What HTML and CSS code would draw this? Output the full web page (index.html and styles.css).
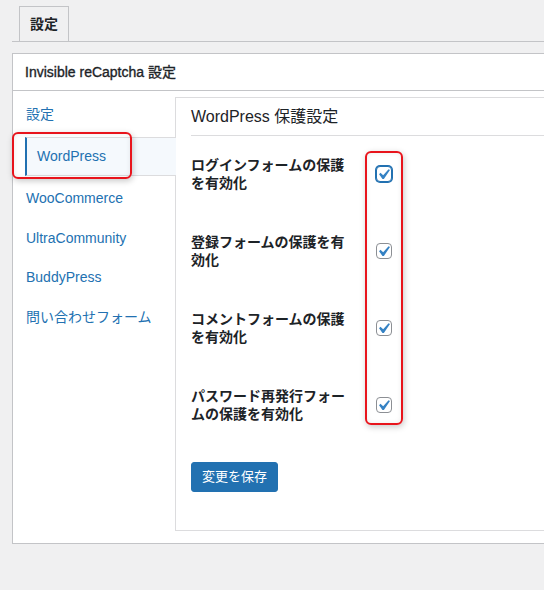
FILE: index.html
```html
<!DOCTYPE html>
<html lang="ja">
<head>
<meta charset="utf-8">
<title>Invisible reCaptcha 設定</title>
<link rel="stylesheet" href="styles.css">
</head>
<body>
<div class="wrap">
  <nav class="tabs"><span class="tab">設定</span></nav>
  <div class="box">
    <div class="box-head">Invisible reCaptcha 設定</div>
    <div class="box-body">
      <ul class="side">
        <li class="side-item"><a href="#">設定</a></li>
        <li class="side-item active"><a href="#">WordPress</a></li>
        <li class="side-item"><a href="#">WooCommerce</a></li>
        <li class="side-item"><a href="#">UltraCommunity</a></li>
        <li class="side-item"><a href="#">BuddyPress</a></li>
        <li class="side-item"><a href="#">問い合わせフォーム</a></li>
      </ul>
      <div class="panel">
        <h2 class="panel-title">WordPress 保護設定</h2>
        <div class="row">
          <div class="label">ログインフォームの保護を有効化</div>
          <div class="field"><span class="cb focus"><svg viewBox="0 0 20 20"><path d="M14.83 4.89l1.34.94-5.81 8.38H9.02L5.78 9.67l1.34-1.25 2.57 2.4z" fill="#3582c4"/></svg></span></div>
        </div>
        <div class="row">
          <div class="label">登録フォームの保護を有効化</div>
          <div class="field"><span class="cb"><svg viewBox="0 0 20 20"><path d="M14.83 4.89l1.34.94-5.81 8.38H9.02L5.78 9.67l1.34-1.25 2.57 2.4z" fill="#3582c4"/></svg></span></div>
        </div>
        <div class="row">
          <div class="label">コメントフォームの保護を有効化</div>
          <div class="field"><span class="cb"><svg viewBox="0 0 20 20"><path d="M14.83 4.89l1.34.94-5.81 8.38H9.02L5.78 9.67l1.34-1.25 2.57 2.4z" fill="#3582c4"/></svg></span></div>
        </div>
        <div class="row">
          <div class="label">パスワード再発行フォームの保護を有効化</div>
          <div class="field"><span class="cb"><svg viewBox="0 0 20 20"><path d="M14.83 4.89l1.34.94-5.81 8.38H9.02L5.78 9.67l1.34-1.25 2.57 2.4z" fill="#3582c4"/></svg></span></div>
        </div>
        <button class="btn" type="button">変更を保存</button>
        <div class="mark mark-checks"></div>
      </div>
      <div class="mark mark-nav"></div>
    </div>
  </div>
</div>
</body>
</html>
```

FILE: styles.css
```css
html, body {
  margin: 0;
  padding: 0;
}
body {
  background: #f0f0f1;
  font-family: "Liberation Sans", "Noto Sans CJK JP", sans-serif;
  font-size: 14px;
  color: #1d2327;
}
.wrap {
  padding: 6px 0 0 12px;
}
.tabs {
  display: flex;
  padding-left: 7px;
  border-bottom: 1px solid #c3c4c7;
}
.tab {
  display: block;
  height: 34px;
  line-height: 34px;
  padding: 0 10px;
  border: 1px solid #c3c4c7;
  border-bottom: 0;
  font-weight: 700;
  font-size: 14px;
  background: #f0f0f1;
}
.box {
  margin-top: 11px;
  background: #fff;
  border: 1px solid #c3c4c7;
  border-right: 0;
}
.box-head {
  height: 36px;
  line-height: 36px;
  padding-left: 12px;
  border-bottom: 1px solid #c3c4c7;
  font-size: 14px;
  font-weight: 400;
  -webkit-text-stroke: 0.35px #1d2327;
}
.box-body {
  display: flex;
  align-items: flex-start;
  position: relative;
}
.side {
  list-style: none;
  margin: 0;
  padding: 3.5px 0 0 0;
  width: 162px;
  flex: none;
}
.side-item a {
  display: block;
  height: 39.5px;
  line-height: 39.5px;
  padding-left: 13px;
  color: #2271b1;
  text-decoration: none;
  font-size: 14px;
}
.side-item.active {
  position: relative;
  z-index: 1;
  margin: 3px -1px 3px 12px;
  border-top: 1px solid #dcdcde;
  border-bottom: 1px solid #dcdcde;
  border-left: 2px solid #2271b1;
  background: #f5f9fd;
}
.side-item.active a {
  height: 37px;
  line-height: 37px;
  padding-left: 10px;
}
.panel {
  flex: 1;
  position: relative;
  margin: 6px 0 12px 0;
  border: 1px solid #dcdcde;
  border-right: 0;
  padding: 0 0 38px 15px;
  background: #fff;
}
.panel-title {
  margin: 0;
  height: 37px;
  line-height: 37px;
  font-size: 16px;
  font-weight: 400;
  border-bottom: 1px solid #dcdcde;
  color: #1d2327;
}
.row {
  display: grid;
  grid-template-columns: 185px 1fr;
  align-items: center;
  padding: 20px 0 21px;
}
.label {
  padding-right: 25px;
  font-weight: 700;
  font-size: 14px;
  line-height: 18px;
}
.cb {
  display: block;
  box-sizing: border-box;
  width: 16px;
  height: 16px;
  border: 1px solid #8c8f94;
  border-radius: 4px;
  background: #fff;
}
.cb svg {
  display: block;
  width: 21px;
  height: 21px;
  margin: -3px 0 0 -4px;
}
.cb.focus {
  border-color: #2271b1;
  box-shadow: 0 0 0 1px #2271b1;
}
.btn {
  display: block;
  margin-top: 18px;
  height: 30px;
  padding: 0 10px;
  border: 1px solid #2271b1;
  border-radius: 3px;
  background: #2271b1;
  color: #fff;
  font-family: "Liberation Sans", "Noto Sans CJK JP", sans-serif;
  font-size: 13px;
  line-height: 28px;
}
.mark {
  position: absolute;
  box-sizing: border-box;
  border: 2px solid #e8141c;
  border-radius: 6px;
  box-shadow: 1px 2px 6px rgba(0, 0, 0, 0.22), inset 0 0 5px rgba(0, 0, 0, 0.08);
  pointer-events: none;
}
.mark-nav {
  left: -1px;
  top: 41px;
  width: 120px;
  height: 47px;
  z-index: 2;
}
.mark-checks {
  left: 189px;
  top: 53px;
  width: 38px;
  height: 274px;
}
```
